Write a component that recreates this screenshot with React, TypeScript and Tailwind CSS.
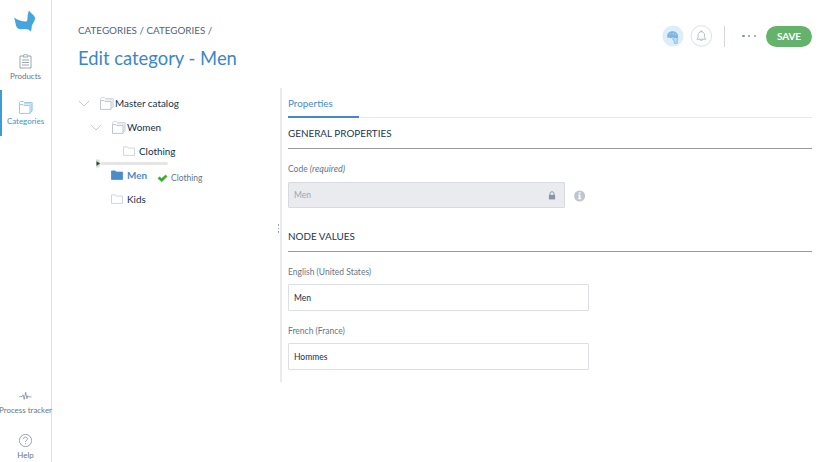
import type { ReactNode } from "react";

function Clipboard() {
  return (
    <svg width="13" height="15" viewBox="0 0 13 15" fill="none" stroke="#929baa" strokeWidth="0.9">
      <path d="M3.500 2H1v12h11V2H9.500" />
      <path d="M4 3V1.200h1.300a1.200 1.200 0 0 1 2.400 0H9V3zM3 6h7M3 8.500h7M3 11h7" />
    </svg>
  );
}

function Folders({ color, back, width, height }: { color: string; back: string; width: number; height: number }) {
  return (
    <svg width={width} height={height} viewBox="0 0 14 13" fill="none" stroke={back} strokeWidth="0.9" strokeLinejoin="round">
      <path d="M.6 3.600V1.300L1.500.5h2.900l1 1h7.800v8.300l-2.200 2.400" />
      <path d="M12.200 10.800V2.900H5" />
      <path d="M.5 12.400V3.600h3.600l.9 1h6v7.800z" stroke={color} fill="white" />
    </svg>
  );
}

function Folder({ filled = false }: { filled?: boolean }) {
  return (
    <svg width="12" height="10" viewBox="0 0 12 10" fill={filled ? "#4b8ccb" : "none"} stroke={filled ? "#4b8ccb" : "#c5cad3"} strokeWidth="0.8" strokeLinejoin="round">
      <path d="M.5 9.400V.9h3.800l1 1.200h6.200v7.300z" />
    </svg>
  );
}

function Chevron() {
  return (
    <svg width="12" height="7" viewBox="0 0 12 7" fill="none" stroke="#bcc2cc" strokeWidth="0.9">
      <path d="M.8.9 6 6 11.200.9" />
    </svg>
  );
}

function Logo() {
  return (
    <svg width="22" height="22" viewBox="0 0 22 22">
      <path d="M.2 7.900C3.500 10 7.500 11.500 12 11.900c.8-.2 1.300-.7 1.400-1.600.1-3.500.2-6.600 1.600-9.900 1.500 2.600 4.900 4.200 5.900 6.900.6 2.200-.7 4.200-2.100 6.400-1 1.700-1.300 3-1.100 4.600l-.8 3.300c-1.600-1.700-3.400-2.500-5.900-2.500-3.700.2-6.700.4-8.100-1.600C1.400 15.200 1.500 11 .2 7.900z" fill="#45a5dd" />
      <path d="M.5 8.200c3.500 2.400 7.500 3.600 11.500 3.700 1.300-.2 1.400-1 1.400-2" fill="none" stroke="#318bc5" strokeWidth=".5" />
    </svg>
  );
}

function NavItem({ icon, label, className, color }: { icon: ReactNode; label: string; className: string; color: string }) {
  return (
    <div className={`flex flex-col items-center ${className}`}>
      {icon}
      <span className={`whitespace-nowrap text-[7.950px] leading-[10px] ${color}`}>{label}</span>
    </div>
  );
}

function Section({ title, className }: { title: string; className: string }) {
  return <h2 className={`border-b border-[#9b9b9f] text-[9.900px] text-[#23364f] ${className}`}>{title}</h2>;
}

export default function App() {
  return (
    <div className="flex h-[462px] w-[838px] overflow-hidden bg-white font-['Lato',sans-serif] text-[#11324d]">
      <nav className="flex w-[52px] shrink-0 flex-col border-r border-[#dcdee2]">
        <div className="flex h-[54px] justify-center pt-[10px] pr-px">
          <Logo />
        </div>
        <NavItem className="h-[36px] gap-[2px]" icon={<Clipboard />} label="Products" color="text-[#67768a]" />
        <NavItem
          className="h-[46px] gap-[2px] border-l-2 border-[#3e9bd4] pt-[11px] pr-[2px]"
          icon={<Folders color="#8fc3e6" back="#8fc3e6" width={14} height={13} />}
          label="Categories"
          color="text-[#4294d0]"
        />
        <div className="grow" />
        <NavItem
          className="h-[43px] gap-[4px]"
          icon={
            <svg width="13" height="10" viewBox="0 0 14 10" fill="none" stroke="#67768a" strokeWidth="0.7" strokeLinejoin="round">
              <path d="M.2 5.700h3l1.200-2 1.200 5L7.200 1l1.300 7 1-3.300 1 1.200h3" />
            </svg>
          }
          label="Process tracker"
          color="text-[#67768a]"
        />
        <NavItem
          className="h-[28px] gap-[3px]"
          icon={
            <svg width="13" height="13" viewBox="0.300 0.300 13.400 13.400" fill="none" stroke="#7f8b9c" strokeWidth="0.8">
              <circle cx="7" cy="7" r="6.300" />
              <path d="M5 5.400c0-2.600 4-2.500 4-.1 0 1.400-2 1.600-2 3.200M7 9.700v1" />
            </svg>
          }
          label="Help"
          color="text-[#67768a]"
        />
      </nav>

      <main className="flex grow flex-col pr-[26px] pl-[26px]">
        <header className="flex h-[88px] justify-between">
          <div className="pt-[24px]">
            <div className="text-[9.850px] leading-[13px] text-[#53657d]">CATEGORIES / CATEGORIES /</div>
            <h1 className="mt-[8px] text-[18.400px] leading-[26px] text-[#3b86c8]">Edit category - Men</h1>
          </div>
          <div className="mt-[25px] flex h-[22px] items-center">
            <svg width="22" height="22" viewBox="0 0 22 22">
              <circle cx="11" cy="11" r="10.600" fill="#dceefa" />
              <path d="M5.300 12.800C4.600 8.500 7 6.300 10.500 6.300c3.700 0 6 2.500 5.600 6.300l-1.200 1.600-1-1.200-1.800.5-1.200-1.200-2 1-1.800-.9z" fill="#7db5de" />
              <path d="M10.500 12.800l.6 2.200 1.200.7v2.600h3v-3l.5-1.800" fill="#b9d9ef" stroke="#7db1d8" strokeWidth=".7" />
              <path d="M7.500 10l1.500-1.800M11 10l.5-2.300M14 10.500l-.5-2" stroke="#cfe6f5" strokeWidth=".6" />
            </svg>
            <svg className="ml-[6px]" width="22" height="22" viewBox="0 0 22 22" fill="none" stroke="#a3adbb" strokeWidth="0.8">
              <circle cx="11.300" cy="11" r="10.300" stroke="#cbd1da" strokeWidth=".7" />
              <path d="M6.800 14.200c1.300-1 1.300-2.200 1.300-4.200 0-4.300 6.400-4.300 6.400 0 0 2 0 3.200 1.300 4.200zM10.600 6.600V6H12v.6M10 14.500c.2 1.400 2.400 1.400 2.600 0" />
            </svg>
            <div className="ml-[12px] h-[21px] w-px bg-[#d4d7dd]" />
            <div className="ml-[17px] flex w-[14px] justify-between">
              <i className="size-[2.500px] rounded-full bg-[#8592a7]" />
              <i className="size-[2.500px] rounded-full bg-[#8592a7]" />
              <i className="size-[2.500px] rounded-full bg-[#8592a7]" />
            </div>
            <button className="ml-[10px] h-[21px] w-[46px] rounded-full bg-[#65b26d] text-[10px] font-bold tracking-[-0.150px] text-white">SAVE</button>
          </div>
        </header>

        <div className="flex h-[294px]">
          <aside className="relative w-[202px] shrink-0 pt-[3px] text-[9.900px]">
            <div className="flex h-6 items-center">
              <Chevron />
              <span className="ml-[10px]"><Folders color="#b9bfc9" back="#d1d5dc" width={14} height={13} /></span>
              <span className="ml-px">Master catalog</span>
            </div>
            <div className="flex h-6 items-center pl-[12px]">
              <Chevron />
              <span className="ml-[10px]"><Folders color="#b9bfc9" back="#d1d5dc" width={14} height={13} /></span>
              <span className="ml-px">Women</span>
            </div>
            <div className="flex h-6 items-center gap-[4px] pl-[45px]">
              <Folder />
              <span>Clothing</span>
            </div>
            <div className="flex h-6 items-center gap-[4px] pl-[33px]">
              <Folder filled />
              <span className="font-bold text-[#4b8ccb]">Men</span>
            </div>
            <div className="flex h-6 items-center gap-[4px] pl-[33px]">
              <Folder />
              <span>Kids</span>
            </div>
            <div className="absolute top-[71px] left-[17px] flex items-center">
              <svg width="7" height="9" viewBox="0 0 7 9">
                <path d="M1 .5h3l2 4-2 4H1z" fill="#d9dcd9" />
                <path d="M1.500 2.200 5 4.500 1.500 6.800z" fill="#284a2d" />
              </svg>
              <div className="-ml-px h-[3px] w-[67px] rounded-full bg-[#e5e5e6]" />
            </div>
            <div className="absolute top-[84px] left-[79px] flex items-center gap-[3px] text-[8.500px] leading-[12px] text-[#65758a]">
              <svg className="mt-px" width="11" height="9" viewBox="0 0 11 9">
                <path d="M.8 4.400 2.700 2.800l2 1.600L8.600.9l1.500 1.700-5.300 5.200z" fill="#30ad24" stroke="#47bd39" strokeWidth=".6" />
              </svg>
              Clothing
            </div>
            <div className="absolute top-[136px] right-px flex flex-col gap-[2px]">
              <i className="h-[1.500px] w-[1.500px] bg-[#9ba5b3]" />
              <i className="h-[1.500px] w-[1.500px] bg-[#9ba5b3]" />
              <i className="h-[1.500px] w-[1.500px] bg-[#9ba5b3]" />
            </div>
          </aside>

          <section className="grow border-l-2 border-[#e9eaed] pl-[6px]">
            <div className="flex h-[30px] border-b border-[#e6e7eb]">
              <div className="h-[30px] w-[71px] border-b-2 border-[#4289cd] pt-[8px] text-[9.900px] leading-[14px] text-[#468bd0]">Properties</div>
            </div>
            <Section title="GENERAL PROPERTIES" className="h-[31px] leading-[31px]" />
            <div className="mt-[13px] text-[8.500px] leading-[14px] text-[#67768a]">
              Code <em className="text-[9px]">(required)</em>
            </div>
            <div className="mt-[6px] flex items-center">
              <div className="flex h-[26px] w-[277px] items-center justify-between rounded-[1px] border border-[#d7dbe1] bg-[#e9ebee] pr-[8px] pl-[5px] text-[8.500px] text-[#9ba7b7]">
                Men
                <svg width="8" height="9" viewBox="0 0 8 9" fill="none">
                  <path d="M2 4V2.700a2 2 0 0 1 4 0V4" stroke="#8d99ab" strokeWidth="1" />
                  <path d="M.9 3.900h6.200v4.500H.9z" fill="#8794a9" />
                </svg>
              </div>
              <svg className="mt-px ml-[9px]" width="12" height="12" viewBox="0 0 12 12">
                <circle cx="5.600" cy="6" r="5.500" fill="#bfc6d0" />
                <path d="M4.800 2.200h1.700v1.600H4.800zM4 4.700h2.500v3.600h.8v1H3.900v-1h.9V5.600H4z" fill="white" />
              </svg>
            </div>
            <Section title="NODE VALUES" className="mt-[13px] h-[31px] leading-[31px]" />
            <div className="mt-[13px] text-[8.500px] leading-[14px] text-[#67768a]">English (United States)</div>
            <div className="mt-[5px] flex h-[27px] w-[301px] items-center rounded-[1px] border border-[#dcdfe5] pt-px pl-[5px] text-[8.500px]">Men</div>
            <div className="mt-[13px] text-[8.500px] leading-[14px] text-[#67768a]">French (France)</div>
            <div className="mt-[5px] flex h-[27px] w-[301px] items-center rounded-[1px] border border-[#dcdfe5] pt-px pl-[5px] text-[8.500px]">Hommes</div>
          </section>
        </div>
      </main>
    </div>
  );
}
